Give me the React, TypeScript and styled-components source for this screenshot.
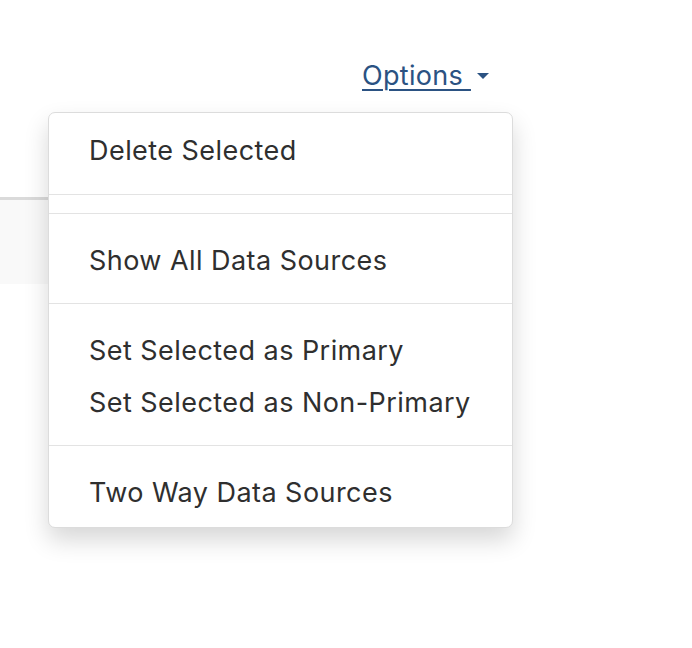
import React from 'react';
import styled, { createGlobalStyle } from 'styled-components';

const GlobalStyle = createGlobalStyle`
  body {
    margin: 0;
    background: #fff;
    font-family: Inter, "Noto Sans", "Liberation Sans", sans-serif;
  }
`;

const Page = styled.div`
  position: relative;
  width: 692px;
  height: 648px;
  overflow: hidden;
`;

const Toolbar = styled.div`
  display: flex;
  padding: 54px 0 0 362px;
  height: 43px;
`;

const Dropdown = styled.div`
  display: inline-flex;
  align-items: center;
`;

const Toggle = styled.a`
  display: inline-flex;
  align-items: center;
  gap: 4px;
  color: #2b5282;
  font-size: 27px;
  letter-spacing: 0.3px;
  line-height: 32px;
  text-decoration: underline;
  text-underline-offset: 4px;
  text-decoration-thickness: 2px;
  cursor: pointer;
`;

const Caret = styled.span`
  display: inline-block;
  width: 0;
  height: 0;
  margin-left: 2px;
  border-left: 6px solid transparent;
  border-right: 6px solid transparent;
  border-top: 6px solid #2b5282;
`;

const Table = styled.div`
  margin-top: 100px;
  width: 320px;
  border-top: 3px solid #dadada;
`;

const HeaderRow = styled.div`
  height: 84px;
  background: #f9f9f9;
`;

const Menu = styled.ul`
  position: absolute;
  top: 112px;
  left: 48px;
  width: 465px;
  box-sizing: border-box;
  margin: 0;
  padding: 10px 0;
  list-style: none;
  background: #fff;
  border: 1px solid #dcdcdc;
  border-radius: 7px;
  box-shadow: 0 12px 24px rgba(0, 0, 0, 0.16);
`;

const Item = styled.li`
  display: block;
  padding: 8px 40px 4px;
  font-size: 27px;
  letter-spacing: 0.45px;
  line-height: 40px;
  color: #2f2f2f;
  white-space: nowrap;
  cursor: pointer;
`;

const Divider = styled.li`
  height: 1px;
  margin: 18.5px 0;
  background: #e3e3e3;
`;

export default function App() {
  return (
    <Page>
      <GlobalStyle />
      <Toolbar>
        <Dropdown>
          <Toggle>
            Options&nbsp;
            <Caret />
          </Toggle>
        </Dropdown>
      </Toolbar>
      <Table>
        <HeaderRow />
      </Table>
      <Menu>
        <Item>Delete Selected</Item>
        <Divider />
        <Divider />
        <Item>Show All Data Sources</Item>
        <Divider />
        <Item>Set Selected as Primary</Item>
        <Item>Set Selected as Non-Primary</Item>
        <Divider />
        <Item>Two Way Data Sources</Item>
      </Menu>
    </Page>
  );
}
